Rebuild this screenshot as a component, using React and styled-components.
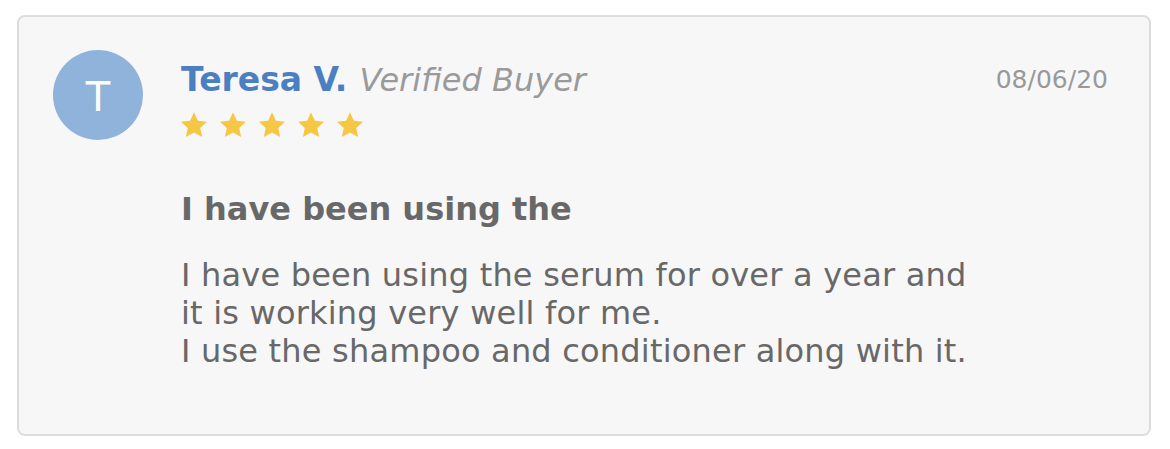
import styled, { createGlobalStyle } from "styled-components";

const GlobalStyle = createGlobalStyle`
  html, body {
    margin: 0;
    padding: 0;
    background: #ffffff;
  }
  body {
    font-family: "DejaVu Sans", Verdana, sans-serif;
  }
`;

const Page = styled.div`
  padding: 15px 19px 13px 17px;
`;

const Card = styled.div`
  display: flex;
  align-items: flex-start;
  gap: 38px;
  min-height: 421px;
  box-sizing: border-box;
  padding: 33px 41px 30px 34px;
  background: #f7f7f7;
  border: 2px solid #dddddd;
  border-radius: 8px;
`;

const Avatar = styled.div`
  flex: 0 0 auto;
  width: 90px;
  height: 90px;
  border-radius: 50%;
  background: #8fb3da;
  color: #fff;
  display: flex;
  align-items: center;
  justify-content: center;
  font-size: 40px;
  line-height: 1;
  padding-top: 3px;
  box-sizing: border-box;
`;

const Body = styled.div`
  flex: 1;
  display: flex;
  flex-direction: column;
`;

const Header = styled.div`
  display: flex;
  justify-content: space-between;
  align-items: flex-start;
  margin-top: 10px;
`;

const NameLine = styled.div`
  line-height: 40px;
`;

const Name = styled.span`
  font-size: 33px;
  font-weight: bold;
  color: #4a80c1;
`;

const Verified = styled.span`
  font-size: 32px;
  font-style: italic;
  color: #9a9a9a;
  margin-left: 12px;
`;

const DateText = styled.span`
  font-size: 25px;
  line-height: 40px;
  color: #999;
`;

const Stars = styled.div`
  display: flex;
  gap: 9px;
  margin-top: 4px;
  margin-left: -2px;
`;

const Title = styled.h3`
  margin: 50px 0 0;
  font-size: 32px;
  font-weight: bold;
  color: #686868;
  line-height: 38px;
`;

const Text = styled.p`
  margin: 28px 0 0;
  font-size: 32px;
  letter-spacing: 0.2px;
  color: #686868;
  line-height: 38px;
`;

function Star() {
  return (
    <svg width="30" height="30" viewBox="0 0 24 24">
      <path
        fill="#f5c744"
        d="M12 1.8l3.1 6.7 7.3.8-5.4 5 1.5 7.2L12 17.9l-6.5 3.6 1.5-7.2-5.4-5 7.3-.8z"
      />
    </svg>
  );
}

export default function App() {
  return (
    <Page>
      <GlobalStyle />
      <Card>
        <Avatar>T</Avatar>
        <Body>
          <Header>
            <NameLine>
              <Name>Teresa V.</Name>
              <Verified>Verified Buyer</Verified>
            </NameLine>
            <DateText>08/06/20</DateText>
          </Header>
          <Stars>
            {[0, 1, 2, 3, 4].map((i) => (
              <Star key={i} />
            ))}
          </Stars>
          <Title>I have been using the</Title>
          <Text>
            I have been using the serum for over a year and
            <br />
            it is working very well for me.
            <br />I use the shampoo and conditioner along with it.
          </Text>
        </Body>
      </Card>
    </Page>
  );
}
